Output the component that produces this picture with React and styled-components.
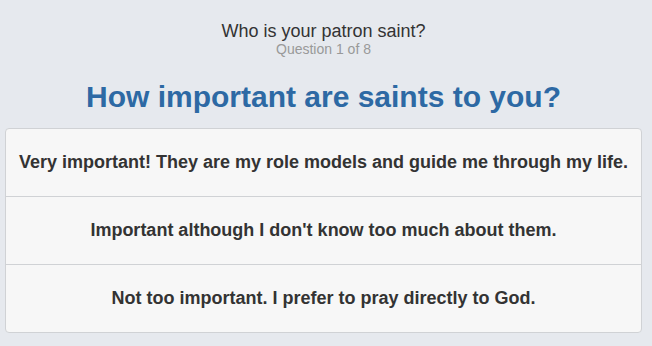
import React from "react";
import styled, { createGlobalStyle } from "styled-components";

const GlobalStyle = createGlobalStyle`
  html, body {
    margin: 0;
    padding: 0;
    background: #e6e9ee;
    font-family: "Liberation Sans", Arial, sans-serif;
  }
`;

const Page = styled.div`
  padding: 21px 10px 0 5px;
`;

const Header = styled.div`
  text-align: center;
`;

const QuizTitle = styled.div`
  font-size: 18px;
  color: #333;
  line-height: 20px;
`;

const Progress = styled.div`
  font-size: 14px;
  color: #999;
  line-height: 16px;
`;

const Question = styled.h1`
  margin: 20px 0 11px;
  font-size: 30px;
  line-height: 40px;
  font-weight: bold;
  color: #2d69a4;
  text-align: center;
`;

const AnswerList = styled.div`
  display: flex;
  flex-direction: column;
  border: 1px solid #d0d2d5;
  border-radius: 4px;
  background: #f7f7f7;
  overflow: hidden;
`;

const Answer = styled.button`
  display: flex;
  align-items: center;
  justify-content: center;
  height: ${(p) => (p.$first ? "67px" : "68px")};
  border: none;
  border-top: ${(p) => (p.$first ? "none" : "1px solid #d0d2d5")};
  background: transparent;
  font-family: inherit;
  font-size: 18px;
  font-weight: bold;
  color: #333;
  cursor: pointer;
  padding: 0;
`;

const answers = [
  "Very important! They are my role models and guide me through my life.",
  "Important although I don't know too much about them.",
  "Not too important. I prefer to pray directly to God.",
];

export default function App() {
  return (
    <>
      <GlobalStyle />
      <Page>
        <Header>
          <QuizTitle>Who is your patron saint?</QuizTitle>
          <Progress>Question 1 of 8</Progress>
        </Header>
        <Question>How important are saints to you?</Question>
        <AnswerList>
          {answers.map((a, i) => (
            <Answer key={i} $first={i === 0}>
              {a}
            </Answer>
          ))}
        </AnswerList>
      </Page>
    </>
  );
}
